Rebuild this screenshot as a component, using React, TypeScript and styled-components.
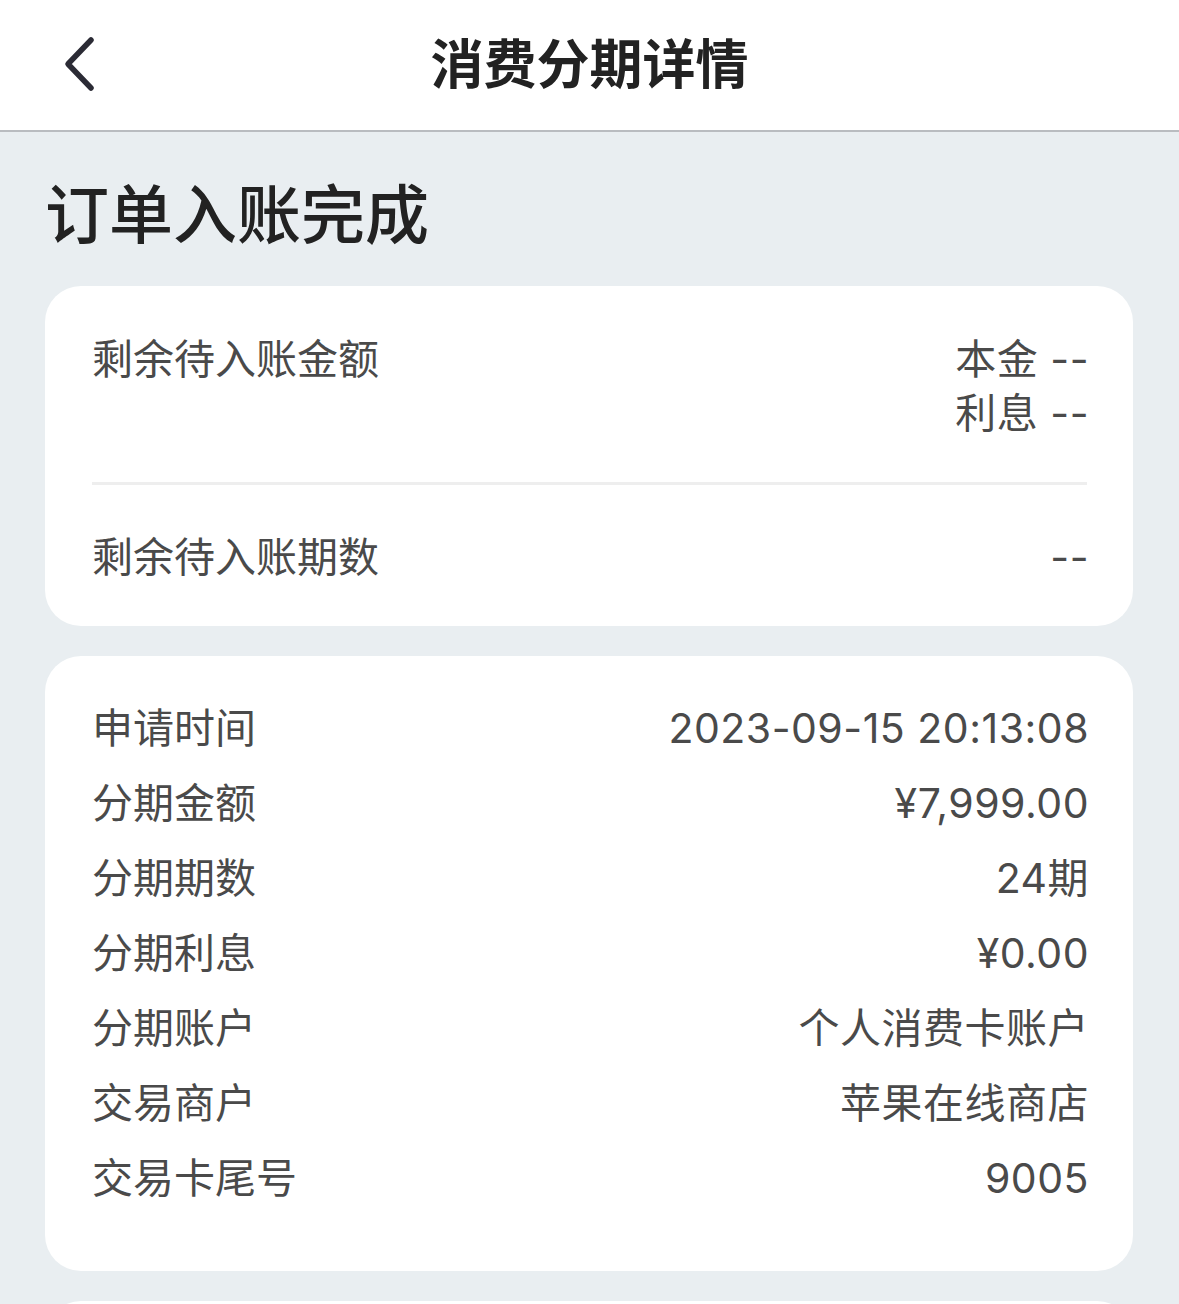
import React from 'react';
import styled, { createGlobalStyle } from 'styled-components';

const GlobalStyle = createGlobalStyle`
  html, body {
    margin: 0;
    padding: 0;
    background: #e9eef1;
    font-family: Inter, "Noto Sans CJK SC", sans-serif;
  }
`;

const details = [
  { label: '申请时间', value: '2023-09-15 20:13:08' },
  { label: '分期金额', value: '¥7,999.00' },
  { label: '分期期数', value: '24期' },
  { label: '分期利息', value: '¥0.00' },
  { label: '分期账户', value: '个人消费卡账户' },
  { label: '交易商户', value: '苹果在线商店' },
  { label: '交易卡尾号', value: '9005' },
];

const App = () => {
  return (
    <Page>
      <GlobalStyle />
      <Header>
        <BackButton aria-label="返回">
          <svg width="34" height="56" viewBox="0 0 34 56" fill="none">
            <path
              d="M29 4 L6 28 L29 52"
              stroke="#2b2b35"
              strokeWidth="5.5"
              strokeLinecap="round"
              strokeLinejoin="round"
            />
          </svg>
        </BackButton>
        <HeaderTitle>消费分期详情</HeaderTitle>
      </Header>

      <Content>
        <StatusTitle>订单入账完成</StatusTitle>

        <Card $padding="46px 44px 42px 47px">
          <Row>
            <Label>剩余待入账金额</Label>
            <ValueStack>
              <Value>本金 --</Value>
              <Value>利息 --</Value>
            </ValueStack>
          </Row>
          <Divider />
          <Row>
            <Label>剩余待入账期数</Label>
            <Value>--</Value>
          </Row>
        </Card>

        <Card $padding="35px 44px 55px 47px">
          {details.map((d) => (
            <DetailRow key={d.label}>
              <Label>{d.label}</Label>
              <Value>{d.value}</Value>
            </DetailRow>
          ))}
        </Card>

        <Card $padding="40px" />
      </Content>
    </Page>
  );
};

export default App;

const Page = styled.div`
  width: 1179px;
  height: 1304px;
  overflow: hidden;
  background: #e9eef1;
`;

const Header = styled.header`
  position: relative;
  height: 130px;
  background: #ffffff;
  border-bottom: 2px solid #b9bcc0;
  display: flex;
  align-items: center;
  justify-content: center;
`;

const BackButton = styled.button`
  position: absolute;
  left: 62px;
  top: 36px;
  padding: 0;
  border: none;
  background: transparent;
  display: flex;
`;

const HeaderTitle = styled.h1`
  margin: 0;
  font-size: 53px;
  font-weight: 700;
  color: #222222;
  line-height: 1;
`;

const Content = styled.main`
  padding: 0 46px 0 45px;
  display: flex;
  flex-direction: column;
  gap: 30px;
`;

const StatusTitle = styled.h2`
  margin: 0 0 -7px;
  padding: 43px 0 8px 0;
  font-size: 64px;
  font-weight: 500;
  color: #222222;
  line-height: 80px;
`;

const Card = styled.section<{ $padding: string }>`
  background: #ffffff;
  border-radius: 36px;
  padding: ${(p) => p.$padding};
  display: flex;
  flex-direction: column;
`;

const Row = styled.div`
  display: flex;
  justify-content: space-between;
  align-items: flex-start;
  font-size: 41px;
  line-height: 54px;
`;

const DetailRow = styled(Row)`
  line-height: 75px;
  align-items: center;
`;

const Label = styled.span`
  color: #4a4a4a;
`;

const Value = styled.span`
  color: #4a4a4a;
  text-align: right;
  letter-spacing: 0.5px;
`;

const ValueStack = styled.div`
  display: flex;
  flex-direction: column;
  align-items: flex-end;
`;

const Divider = styled.hr`
  margin: 42px 2px 45px 0;
  border: none;
  height: 3px;
  background: #eeeeee;
`;
